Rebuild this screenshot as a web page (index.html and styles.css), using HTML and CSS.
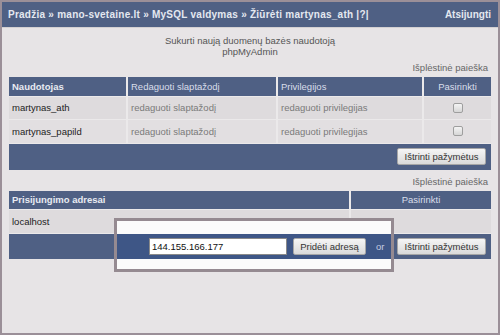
FILE: index.html
```html
<!DOCTYPE html>
<html lang="lt">
<head>
  <meta charset="UTF-8">
  <meta name="viewport" content="width=device-width, initial-scale=1.0">
  <title>Žiūrėti martynas_ath</title>
  <link rel="stylesheet" href="styles.css">
</head>
<body>
  <div class="langas">
    <div class="virsus">
      <div class="kelias">Pradžia » mano-svetaine.lt » MySQL valdymas » Žiūrėti martynas_ath |?|</div>
      <div class="atsijungti">Atsijungti</div>
    </div>

    <div class="turinys">
      <div class="antraste">Sukurti naują duomenų bazės naudotoją<br>phpMyAdmin</div>

      <div class="paieska">Išplėstinė paieška</div>
      <table class="lentele">
        <colgroup>
          <col style="width: 118px">
          <col style="width: 150px">
          <col style="width: 146px">
          <col style="width: 68px">
        </colgroup>
        <tr class="galva">
          <th class="pagr">Naudotojas</th>
          <th>Redaguoti slaptažodį</th>
          <th>Privilegijos</th>
          <th class="centras">Pasirinkti</th>
        </tr>
        <tr class="eil1">
          <td>martynas_ath</td>
          <td class="nuoroda">redaguoti slaptažodį</td>
          <td class="nuoroda">redaguoti privilegijas</td>
          <td class="centras"><input type="checkbox" class="zyma"></td>
        </tr>
        <tr class="eil2">
          <td>martynas_papild</td>
          <td class="nuoroda">redaguoti slaptažodį</td>
          <td class="nuoroda">redaguoti privilegijas</td>
          <td class="centras"><input type="checkbox" class="zyma"></td>
        </tr>
      </table>
      <div class="apacia">
        <button class="mygtukas">Ištrinti pažymėtus</button>
      </div>

      <div class="paieska antra">Išplėstinė paieška</div>
      <table class="lentele">
        <colgroup>
          <col style="width: 341px">
          <col style="width: 141px">
        </colgroup>
        <tr class="galva">
          <th class="pagr">Prisijungimo adresai</th>
          <th class="centras">Pasirinkti</th>
        </tr>
        <tr class="eil3">
          <td>localhost</td>
          <td></td>
        </tr>
      </table>
      <div class="apacia aukstesne">
        <div class="pazymeta">
          <input type="text" class="laukas" value="144.155.166.177">
          <button class="mygtukas">Pridėti adresą</button>
          <span class="arba">or</span>
        </div>
        <button class="mygtukas">Ištrinti pažymėtus</button>
      </div>
    </div>

    <div class="remelis"></div>
  </div>
</body>
</html>
```

FILE: styles.css
```css
* {
  box-sizing: border-box;
}

body {
  margin: 0;
  font-family: 'Liberation Sans', Arial, sans-serif;
}

.langas {
  position: relative;
  width: 500px;
  height: 335px;
  border: 2px solid #9b8f98;
  background-color: #e7e4e6;
}

.virsus {
  display: flex;
  justify-content: space-between;
  align-items: center;
  height: 26px;
  padding: 0 7px 0 6px;
  background-color: #4f6084;
  border-bottom: 1px solid #d3d0d2;
  color: #e4e8f0;
  font-size: 10px;
  font-weight: bold;
}

.kelias {
  letter-spacing: 0.25px;
}

.turinys {
  padding: 0 7px;
}

.antraste {
  margin-top: 7px;
  text-align: center;
  font-size: 9.5px;
  line-height: 11px;
  color: #555;
}

.paieska {
  margin: 5px 3px 4px 0;
  text-align: right;
  font-size: 9.5px;
  line-height: 11px;
  color: #666;
}

.paieska.antra {
  margin-top: 6px;
}

.lentele {
  width: 482px;
  table-layout: fixed;
  border-collapse: collapse;
  font-size: 9.5px;
}

.lentele th,
.lentele td {
  padding: 0 3px;
  text-align: left;
  border-right: 2px solid #ebe9ea;
  border-bottom: 1px solid #ebe9ea;
  white-space: nowrap;
}

.lentele th:last-child,
.lentele td:last-child {
  border-right: none;
}

.galva th {
  height: 19px;
  background-color: #4f6084;
  color: #d9deea;
  font-weight: normal;
}

.galva th.pagr {
  color: #e8ebf2;
  font-weight: bold;
}

.lentele th.centras,
.lentele td.centras {
  text-align: center;
}

.eil1 td {
  height: 23px;
  background-color: #dedbdd;
  color: #222;
}

.eil2 td {
  height: 24px;
  background-color: #e2dfe1;
  color: #222;
}

.eil3 td {
  height: 24px;
  background-color: #dedbdd;
  color: #222;
}

.lentele td.nuoroda {
  color: #7a7a7a;
}

.zyma {
  appearance: none;
  display: block;
  margin: 0 auto;
  width: 10px;
  height: 10px;
  border: 1px solid #9e9e9e;
  border-radius: 2px;
  background: linear-gradient(#f4f4f4, #d6d6d6);
}

.apacia {
  display: flex;
  justify-content: flex-end;
  align-items: center;
  width: 482px;
  height: 26px;
  padding-right: 5px;
  background-color: #4f6084;
}

.aukstesne {
  position: relative;
  z-index: 2;
  height: 25px;
  justify-content: space-between;
  padding-left: 105px;
}

.pazymeta {
  display: flex;
  align-items: center;
  height: 100%;
  width: 280px;
  padding-left: 32px;
  background-color: #3e5686;
  border-left: 3px solid #958a91;
  border-right: 3px solid #958a91;
}

.laukas {
  width: 138px;
  height: 17px;
  padding: 0 2px;
  border: 1px solid #8a8a8a;
  background: #fff;
  font-family: 'Liberation Sans', Arial, sans-serif;
  font-size: 9.5px;
  color: #111;
}

.mygtukas {
  height: 17px;
  padding: 0 5px;
  border: 1px solid #a6a6a6;
  border-radius: 2px;
  background: linear-gradient(#f5f5f5, #dadada);
  font-family: 'Liberation Sans', Arial, sans-serif;
  font-size: 9.5px;
  color: #333;
}

.apacia > .mygtukas {
  width: 89px;
}

.pazymeta .mygtukas {
  width: 73px;
  margin-left: 6px;
}

.arba {
  margin-left: 10px;
  font-size: 9.5px;
  color: #c7cde0;
}

.remelis {
  position: absolute;
  z-index: 1;
  left: 112px;
  top: 216px;
  width: 280px;
  height: 54px;
  border: 3px solid #958a91;
  background-color: #fbfbfb;
}
```
